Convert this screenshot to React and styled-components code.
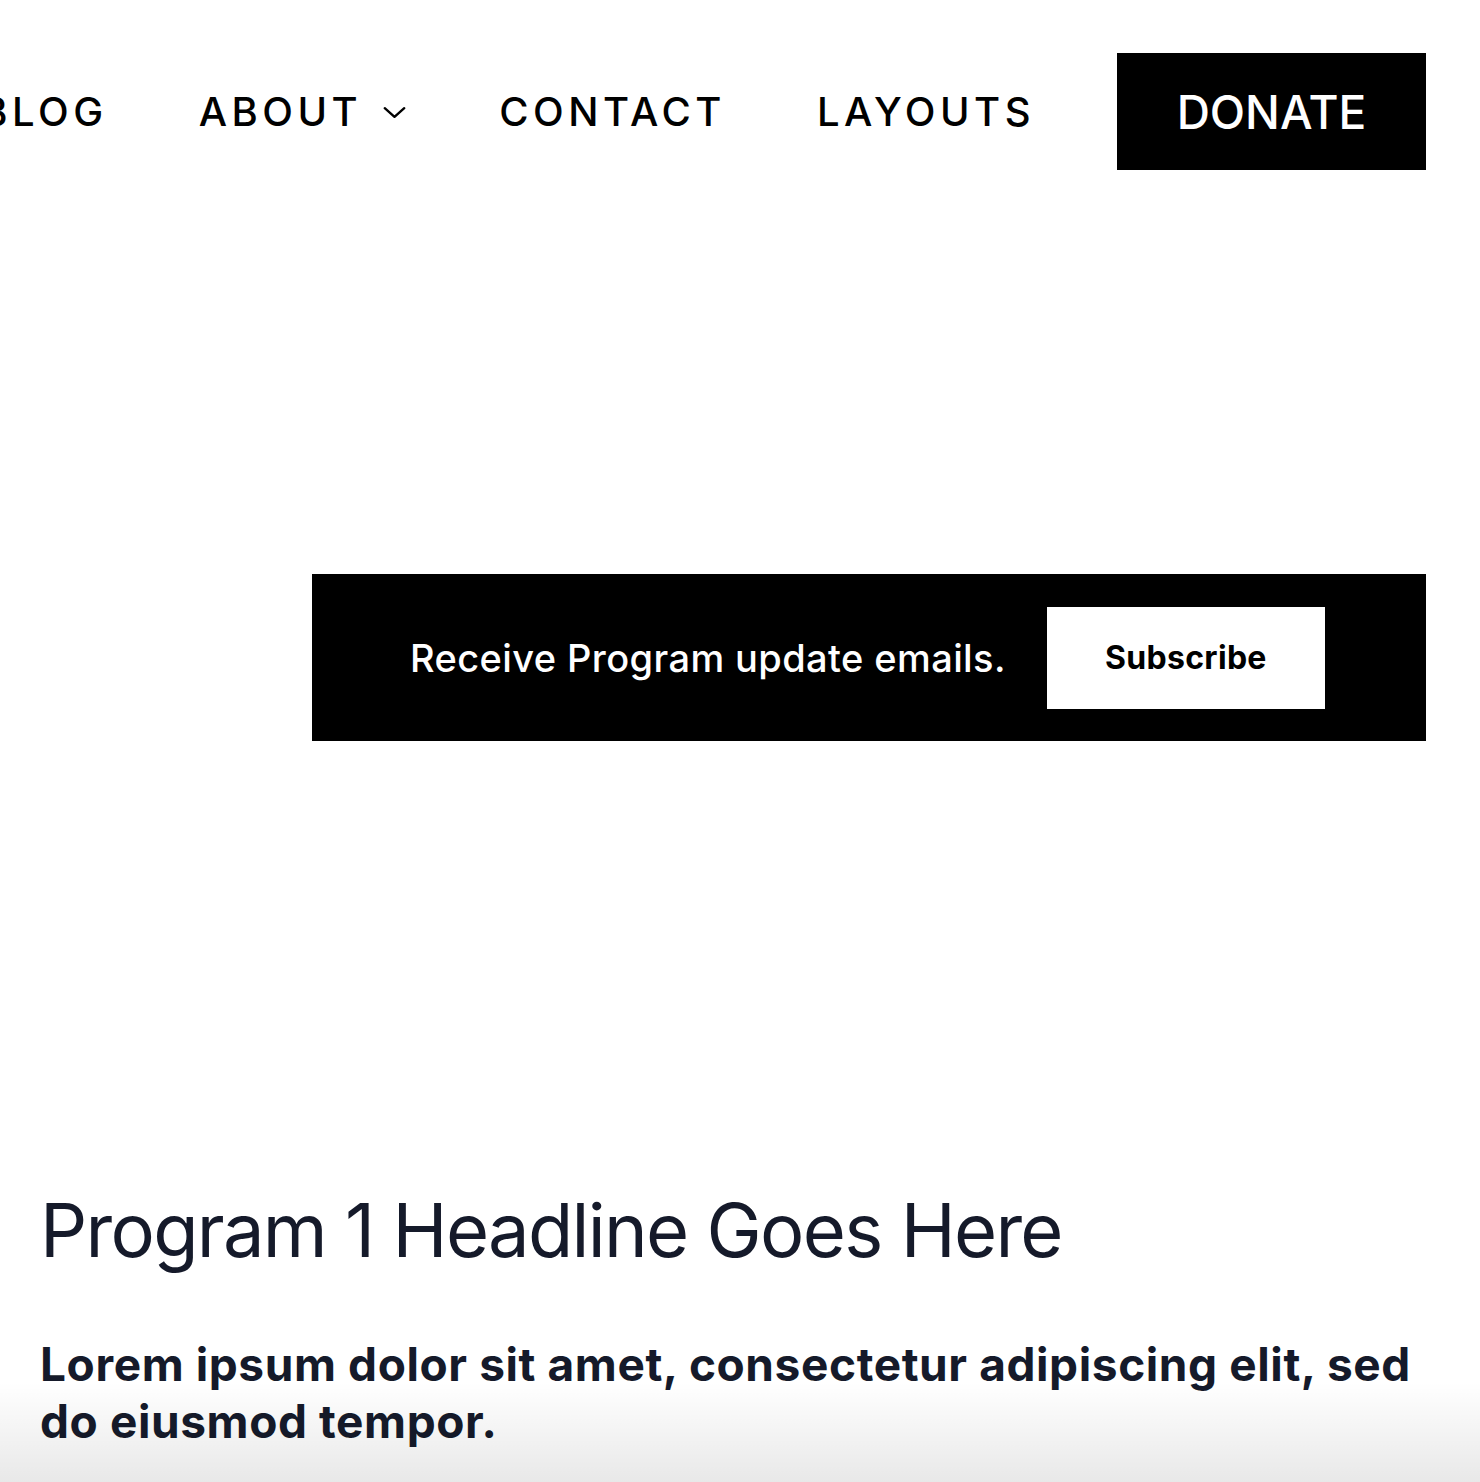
import React from "react";
import styled, { createGlobalStyle } from "styled-components";

const Global = createGlobalStyle`
  html, body { margin: 0; padding: 0; background: #ffffff; }
  body { font-family: "Inter", "Liberation Sans", sans-serif; -webkit-font-smoothing: antialiased; }
  * { box-sizing: border-box; }
`;

const Page = styled.div`
  width: 1480px;
  min-height: 1482px;
  overflow: hidden;
  position: relative;
`;

const Header = styled.header`
  display: flex;
  justify-content: flex-end;
  align-items: center;
  padding: 53px 54px 0 0;
  overflow: hidden;
`;

const NavList = styled.nav`
  display: flex;
  align-items: center;
  flex-shrink: 0;
  gap: 91px;
  margin-right: 82px;
  white-space: nowrap;
`;

const NavLink = styled.a`
  display: inline-flex;
  align-items: center;
  gap: 19px;
  font-family: "Inter", "Liberation Sans", sans-serif;
  font-weight: 500;
  font-size: 40px;
  letter-spacing: 4.5px;
  color: #000;
  text-decoration: none;
`;

const Chevron = styled.svg`
  width: 27px;
  height: 26px;
  flex-shrink: 0;
`;

const DonateButton = styled.a`
  display: flex;
  align-items: center;
  justify-content: center;
  flex-shrink: 0;
  width: 309px;
  height: 117px;
  background: #000;
  color: #fff;
  font-family: "Inter", "Liberation Sans", sans-serif;
  font-weight: 500;
  font-size: 46px;
  text-decoration: none;
`;

const SubscribeRow = styled.section`
  display: flex;
  justify-content: flex-end;
  padding: 404px 54px 0 0;
`;

const SubscribeBar = styled.div`
  width: 1114px;
  height: 167px;
  background: #000;
  display: flex;
  align-items: center;
  padding-left: 98px;
  gap: 41px;
`;

const SubscribeText = styled.p`
  margin: 0;
  color: #fff;
  font-family: "Inter", "Liberation Sans", sans-serif;
  font-weight: 500;
  font-size: 38px;
  letter-spacing: 0.4px;
  white-space: nowrap;
`;

const SubscribeButton = styled.button`
  width: 278px;
  height: 102px;
  flex-shrink: 0;
  border: none;
  background: #fff;
  color: #000;
  font-family: "Inter", "Liberation Sans", sans-serif;
  font-weight: 700;
  font-size: 32px;
  letter-spacing: 0.3px;
  cursor: pointer;
`;

const Content = styled.main`
  padding: 444px 54px 0 40px;
`;

const Headline = styled.h1`
  margin: 0;
  font-family: "Inter", "Liberation Sans", sans-serif;
  font-weight: 400;
  font-size: 74px;
  line-height: 90px;
  letter-spacing: -1.7px;
  color: #151a2a;
`;

const Lead = styled.p`
  margin: 61px 0 0;
  max-width: 1420px;
  font-family: "Inter", "Liberation Sans", sans-serif;
  font-weight: 700;
  font-size: 46px;
  line-height: 57px;
  letter-spacing: 0.6px;
  color: #151a2a;
`;

const BottomFade = styled.div`
  position: absolute;
  left: 0;
  right: 0;
  bottom: 0;
  height: 100px;
  pointer-events: none;
  background: linear-gradient(to bottom, rgba(0, 0, 0, 0), rgba(0, 0, 0, 0.09));
`;

export default function App() {
  return (
    <>
      <Global />
      <Page>
        <Header>
          <NavList>
            <NavLink href="#">BLOG</NavLink>
            <NavLink href="#">
              ABOUT
              <Chevron viewBox="0 0 24 24" fill="none" stroke="#000" strokeWidth="2.2" strokeLinecap="round" strokeLinejoin="round">
                <path d="M3 8.5l9 8 9-8" />
              </Chevron>
            </NavLink>
            <NavLink href="#">CONTACT</NavLink>
            <NavLink href="#">LAYOUTS</NavLink>
          </NavList>
          <DonateButton href="#">DONATE</DonateButton>
        </Header>
        <SubscribeRow>
          <SubscribeBar>
            <SubscribeText>Receive Program update emails.</SubscribeText>
            <SubscribeButton>Subscribe</SubscribeButton>
          </SubscribeBar>
        </SubscribeRow>
        <Content>
          <Headline>Program 1 Headline Goes Here</Headline>
          <Lead>Lorem ipsum dolor sit amet, consectetur adipiscing elit, sed do eiusmod tempor.</Lead>
        </Content>
        <BottomFade />
      </Page>
    </>
  );
}
